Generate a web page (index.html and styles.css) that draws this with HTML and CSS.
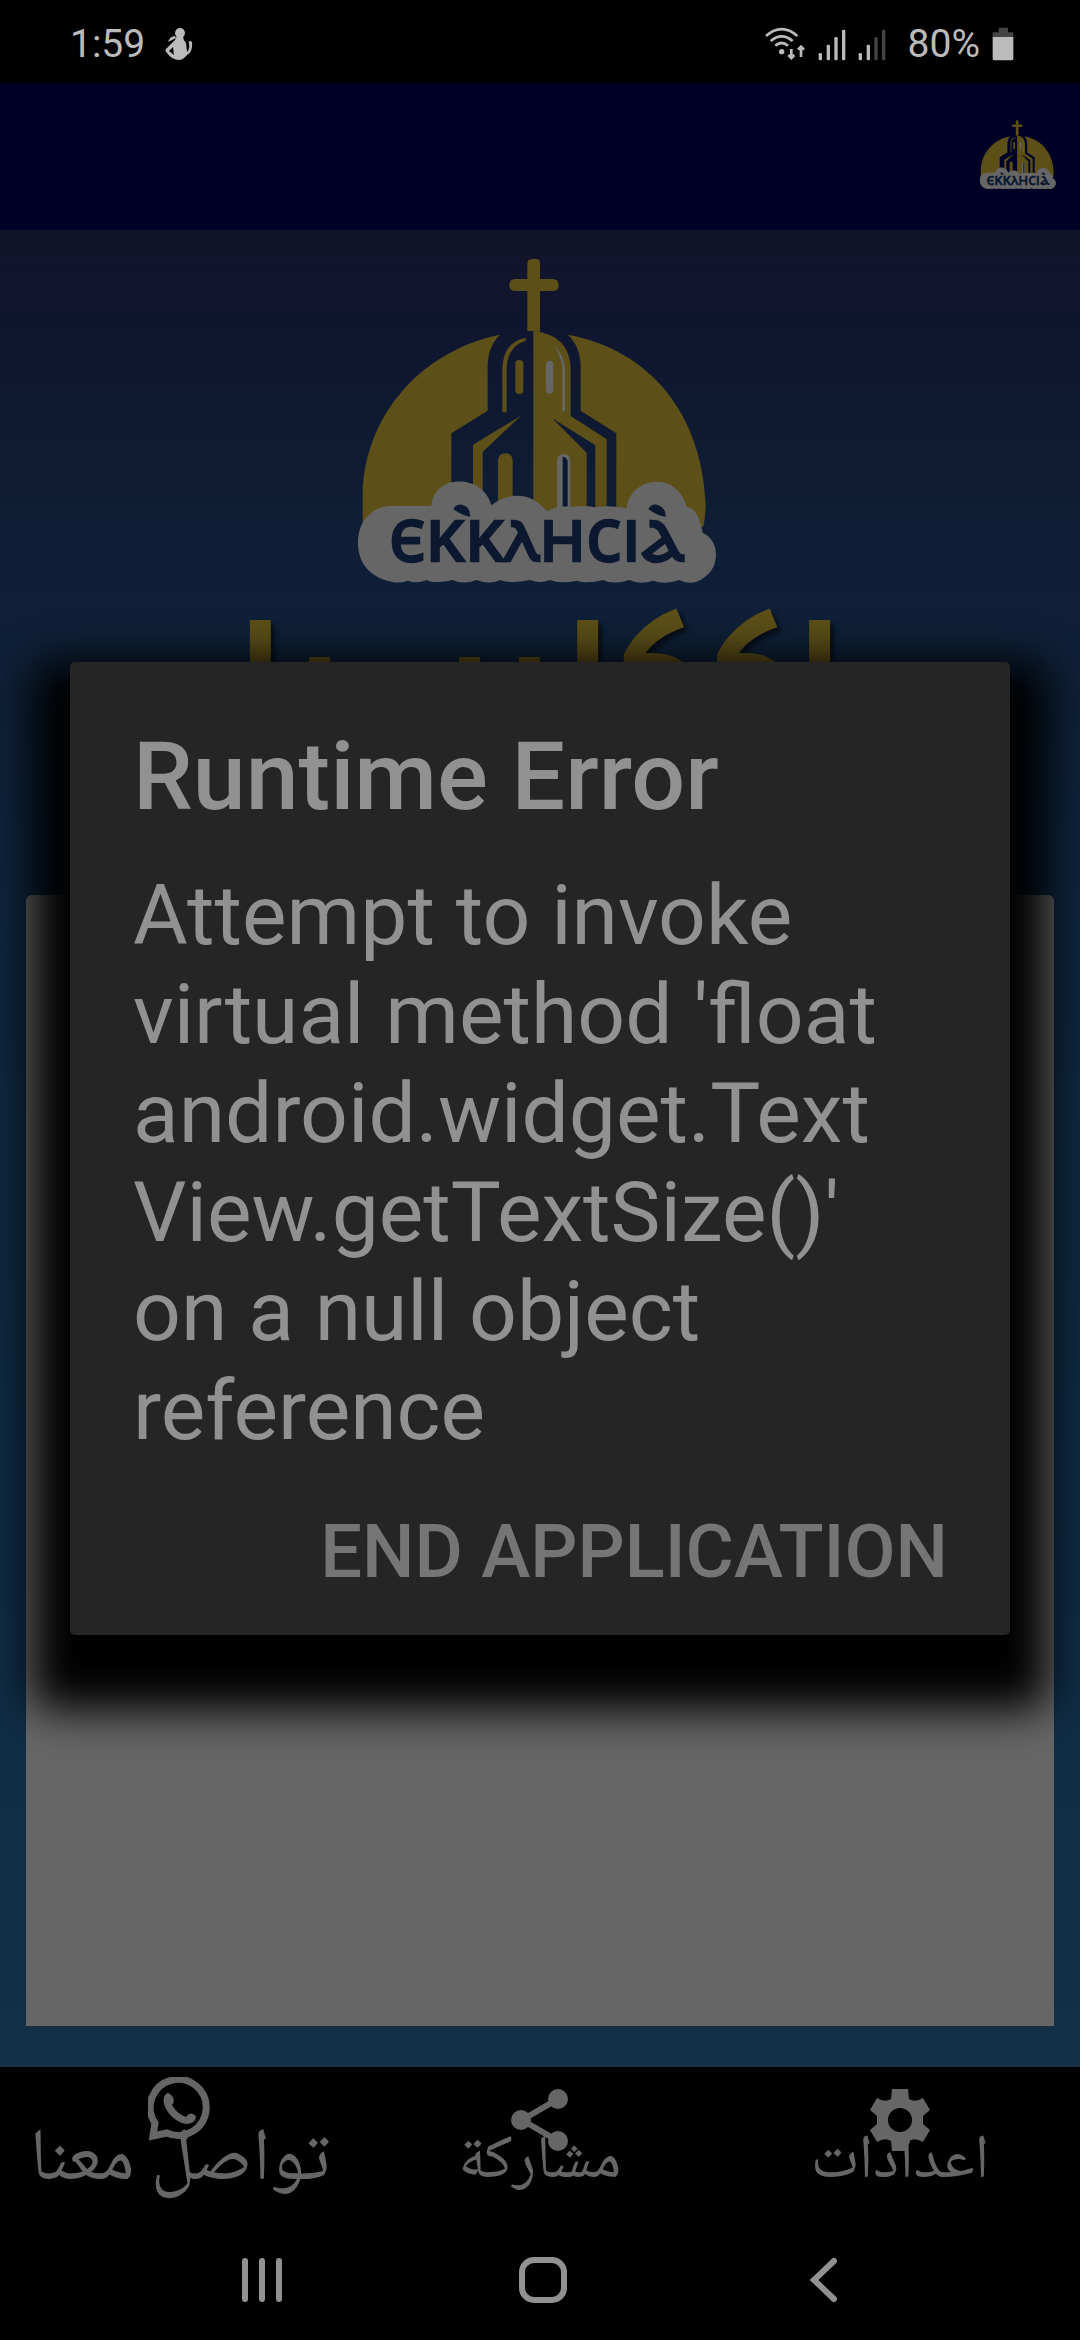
FILE: index.html
```html
<!DOCTYPE html>
<html lang="ar">
<head>
<meta charset="utf-8">
<meta name="viewport" content="width=device-width, initial-scale=1">
<title>Runtime Error</title>
<link rel="stylesheet" href="styles.css">
</head>
<body>
<svg class="defs" aria-hidden="true">
  <symbol id="church" viewBox="0 0 1200 1080">
    <g class="gold">
      <path d="M580 57h8q12 0 12 12v48h38q18 0 18 18t-18 18h-38v122h-20v-2h-18V153h-36q-18 0-18-18t18-18h36V70q0-13 18-13z"/>
      <path d="M480 284Q443 320 443 380V512L334 580V860H68V760C75 520 250 330 480 284z"/>
      <path d="M684 284Q722 320 722 385V512L829 580V860H1090Q1097 830 1097 790C1085 520 930 330 684 284z"/>
      <path d="M557 293v9Q500 320 500 390V517H487V385Q490 305 557 293z"/>
      <rect x="526" y="360" width="24" height="102" rx="12"/>
      <path d="M543 527L428 636V840H399V614z"/>
      <path d="M474 840V664q0-24 22-24t22 24V840z"/>
      <path d="M580 273Q692 285 692 390V528L800 598V840H766V616L637 535L740 638V840H580z"/>
    </g>
    <g class="cloud">
      <path d="M638 312Q672 345 675 385V514H667V385Q664 345 638 312z"/>
      <rect x="618" y="362" width="22" height="99" rx="11"/>
      <path d="M651 840V664q0-22 20-22t20 22V840z"/>
    </g>
    <path class="navy" d="M668 800V650q15 0 15 20V800z"/>
    <path class="cloud" d="M150 798H274C280 700 430 700 454 796C500 760 570 750 620 814Q650 797 700 800Q735 795 765 802Q800 795 860 805C870 710 1010 690 1040 800Q1075 805 1088 878C1140 900 1140 980 1095 1010C1070 1032 1045 1032 1018 1020Q975 1035 940 1022Q900 1035 868 1020Q820 1035 790 1020Q740 1032 710 1022Q660 1032 630 1020Q600 1032 570 1020Q510 1032 480 1020Q450 1035 410 1020Q370 1035 338 1020Q280 1032 260 1020Q230 1032 205 1022Q170 1032 150 1024C90 1010 54 970 54 908C54 840 100 800 150 798z"/>
    <g class="navy">
      <path d="M340 808q6-16 26-14q26 8 25 36q-20-1-51-22zM925 808q6-16 26-14q26 8 26 36q-22-1-52-22z"/>
      <text class="coptic" x="588" y="964" text-anchor="middle">ⲉⲕⲕⲗⲏⲥⲓⲁ</text>
    </g>
  </symbol>
</svg>

<header class="status">
  <div class="status-group">
    <span>1:59</span>
    <svg width="28" height="34" viewBox="0 0 28 34" class="lit"><circle cx="15" cy="6" r="5"/><path d="M12 9h6q0 4 3 7l1 9q3-3 2-8t3-2q1 10-5 13-4 5-8 5-7 0-12-7-3-3 0-5l8-8zM8 20l-4 4 5 4zM3 15q2-6 7-6l1 2z" fill-rule="evenodd"/></svg>
  </div>
  <div class="status-group">
    <svg width="42" height="34" viewBox="0 0 126 102"><g class="lit-line"><path d="M6 27Q53-14 100 27M20 42Q53 14 86 42M34 56Q53 40 72 56"/><path d="M82 66v28M73 84l9 9 9-9M111 90V60M102 68l9-9 9 9"/></g><circle class="lit" cx="53" cy="74" r="8"/></svg>
    <svg width="28" height="34" viewBox="0 0 84 102" class="lit"><rect x="2" y="78" width="10" height="22" rx="4"/><rect x="26" y="53" width="10" height="47" rx="4"/><rect x="49" y="30" width="10" height="70" rx="4"/><rect x="72" y="8" width="10" height="92" rx="4"/></svg>
    <svg width="28" height="34" viewBox="0 0 84 102" class="lit"><rect x="2" y="78" width="10" height="22" rx="4"/><rect x="26" y="53" width="10" height="47" rx="4"/><g class="dim"><rect x="49" y="30" width="10" height="70" rx="4"/><rect x="72" y="8" width="10" height="92" rx="4"/></g></svg>
    <span class="battery-text">80%</span>
    <svg width="22" height="34" viewBox="0 0 66 102"><path class="dim" d="M20 2h28v14h16v16H2V16h18z"/><path class="lit" d="M2 30h62v65q0 5-5 5H7q-5 0-5-5z"/></svg>
  </div>
</header>

<div class="appbar"><svg class="mini-logo" role="img" aria-label="Ekklesia"><use href="#church"/></svg></div>

<main class="home">
  <svg class="logo" role="img" aria-label="Ekklesia"><use href="#church"/></svg>
  <h1 class="brand" dir="rtl">اككليسيا</h1>
  <section class="panel"></section>
</main>

<nav class="tabs">
  <button class="tab tab-wide">
    <svg width="64" height="64" viewBox="0 0 64 64"><path d="M7 46A28 28 0 1 1 19 56L5 59Z" fill="none" stroke="currentColor" stroke-width="7"/><path d="M20 16C16 17 15 22 16 27C19 37 29 46 38 47C44 47 48 44 48 39C44 36 42 35 38 40C32 38 27 33 24 28C28 24 25 18 20 16Z" fill="currentColor"/></svg>
    <span>تواصل معنا</span>
  </button>
  <button class="tab">
    <svg width="64" height="64" viewBox="0 0 64 64" fill="currentColor"><path d="M50 11L14 32L50 53" fill="none" stroke="currentColor" stroke-width="6"/><circle cx="50" cy="11" r="10"/><circle cx="13" cy="32" r="10"/><circle cx="50" cy="53" r="10"/></svg>
    <span>مشاركة</span>
  </button>
  <button class="tab">
    <svg width="64" height="64" viewBox="-32 -32 64 64" fill="currentColor"><path fill-rule="evenodd" d="M-8-31H8L9-21Q15-17 23-22L30-10L23-4V4L30 10L23 22Q15 17 9 21L8 31H-8L-9 21Q-15 17-23 22L-30 10L-23 4V-4L-30-10L-23-22Q-15-17-9-21ZM0-12A12 12 0 1 0 0 12A12 12 0 1 0 0-12Z"/></svg>
    <span>اعدادات</span>
  </button>
</nav>

<footer class="sysnav">
  <button aria-label="Recents"><svg width="48" height="48" viewBox="0 0 48 48"><path d="M7 5v38M24 5v38M41 5v38"/></svg></button>
  <button aria-label="Home"><svg width="48" height="48" viewBox="0 0 48 48"><rect x="3" y="4" width="42" height="40" rx="12"/></svg></button>
  <button aria-label="Back"><svg width="48" height="48" viewBox="0 0 48 48"><path d="M34 5L14 24L34 43"/></svg></button>
</footer>

<div class="overlay">
  <div class="dialog" role="alertdialog" aria-labelledby="dlg-title" aria-describedby="dlg-text" lang="en">
    <h2 id="dlg-title">Runtime Error</h2>
    <p id="dlg-text">Attempt to invoke<br>virtual method 'float<br>android.widget.Text<br>View.getTextSize()'<br>on a null object<br>reference</p>
    <button class="end">END APPLICATION</button>
  </div>
</div>
</body>
</html>
```
FILE: styles.css
```css
* { box-sizing: border-box; }

body {
  margin: 0;
  min-height: 100vh;
  display: flex;
  flex-direction: column;
  background: #000;
  font-family: Roboto, "Noto Sans", sans-serif;
}

button {
  padding: 0;
  border: 0;
  background: none;
  font: inherit;
  color: inherit;
}

svg { display: block; flex: none; }
.defs { position: absolute; width: 0; height: 0; }

.gold { fill: #5c4f18; }
.cloud { fill: #666; }
.navy { fill: #0b1830; }
.coptic { font: bold 222px "Noto Sans Coptic", "DejaVu Serif", serif; }

/* Status bar */
.status {
  height: 83px;
  padding: 5px 66px 0 70px;
  display: flex;
  align-items: center;
  justify-content: space-between;
  color: #bbb;
  font-size: 39px;
  line-height: 48px;
}
.status-group { display: flex; align-items: center; gap: 12px; }
.status-group:first-child { gap: 20px; }
.battery-text { margin-left: 10px; }
.lit { fill: #bbb; }
.lit-line { fill: none; stroke: #bbb; stroke-width: 8; }
.dim { fill: #444; }

.appbar {
  height: 147px;
  padding: 0 19px 4px 0;
  display: flex;
  align-items: center;
  justify-content: flex-end;
  background: #000027;
}
.mini-logo { width: 85px; height: 77px; }

/* Home screen */
.home {
  flex: 1;
  display: flex;
  flex-direction: column;
  align-items: center;
  padding: 10px 26px 41px;
  background: linear-gradient(#12142a, #10152f 5%, #0f1b33 12%, #0f2038 21%, #0e263e 40%, #0f2c45 75%, #133046);
}
.logo { width: 400px; height: 360px; }
.brand {
  height: 295px;
  margin: 0;
  color: #5c4f18;
  font: bold 141px/160px "Noto Kufi Arabic", "DejaVu Sans", sans-serif;
  text-shadow: 4px 4px 4px #0008;
}
.panel {
  flex: 1;
  align-self: stretch;
  border-radius: 6px 6px 0 0;
  background: #666;
}

/* Bottom tabs */
.tabs {
  height: 147px;
  display: grid;
  grid-template-columns: repeat(3, 1fr);
  color: #666;
}
.tab {
  display: flex;
  flex-direction: column;
  align-items: center;
  justify-content: flex-start;
  padding-top: 21px;
  font: 62px/64px "Noto Naskh Arabic", "DejaVu Sans", sans-serif;
}
.tab-wide { padding-top: 10px; font-size: 74px; }
.tab span { margin-top: -20px; white-space: nowrap; }
.tab-wide span { margin-top: -10px; }

/* System navigation */
.sysnav {
  height: 126px;
  padding: 6px 115px 0 121px;
  display: grid;
  grid-template-columns: repeat(3, 1fr);
}
.sysnav button { display: grid; place-items: center; }
.sysnav svg {
  fill: none;
  stroke: #919191;
  stroke-width: 6;
  stroke-linecap: round;
}

/* Error dialog */
.overlay {
  position: fixed;
  inset: 83px 0 126px;
  padding: 0 70px;
  display: grid;
  align-items: center;
}
.dialog {
  display: flex;
  flex-direction: column;
  padding: 59px 62px 41px 63px;
  border-radius: 5px;
  background: #252525;
  color: #919191;
  box-shadow: 0 37px 44px 38px #000;
}
.dialog h2 {
  margin: 0;
  font-size: 95px;
  font-weight: 500;
  line-height: 112px;
}
.dialog p {
  margin: 33px 0 0;
  font-size: 84px;
  line-height: 99px;
}
.end {
  align-self: flex-end;
  margin-top: 50px;
  color: #757575;
  font-size: 74px;
  font-weight: 500;
  line-height: 84px;
}
```
